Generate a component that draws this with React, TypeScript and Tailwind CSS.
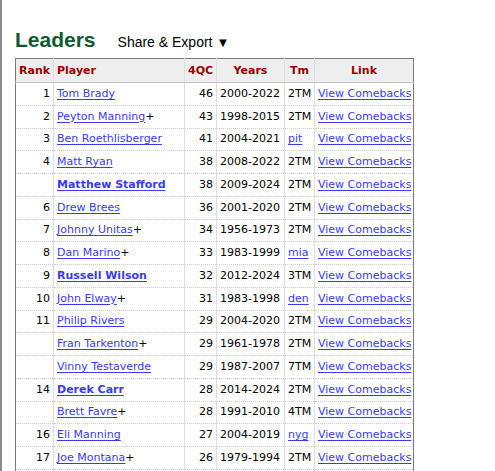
import React from "react";

type Row = { rank: string; name: string; plus?: boolean; bold?: boolean; qc: string; years: string; tm: string; tmLink?: boolean };

const rows: Row[] = [
  { rank: "1", name: "Tom Brady", qc: "46", years: "2000-2022", tm: "2TM" },
  { rank: "2", name: "Peyton Manning", plus: true, qc: "43", years: "1998-2015", tm: "2TM" },
  { rank: "3", name: "Ben Roethlisberger", qc: "41", years: "2004-2021", tm: "pit", tmLink: true },
  { rank: "4", name: "Matt Ryan", qc: "38", years: "2008-2022", tm: "2TM" },
  { rank: "", name: "Matthew Stafford", bold: true, qc: "38", years: "2009-2024", tm: "2TM" },
  { rank: "6", name: "Drew Brees", qc: "36", years: "2001-2020", tm: "2TM" },
  { rank: "7", name: "Johnny Unitas", plus: true, qc: "34", years: "1956-1973", tm: "2TM" },
  { rank: "8", name: "Dan Marino", plus: true, qc: "33", years: "1983-1999", tm: "mia", tmLink: true },
  { rank: "9", name: "Russell Wilson", bold: true, qc: "32", years: "2012-2024", tm: "3TM" },
  { rank: "10", name: "John Elway", plus: true, qc: "31", years: "1983-1998", tm: "den", tmLink: true },
  { rank: "11", name: "Philip Rivers", qc: "29", years: "2004-2020", tm: "2TM" },
  { rank: "", name: "Fran Tarkenton", plus: true, qc: "29", years: "1961-1978", tm: "2TM" },
  { rank: "", name: "Vinny Testaverde", qc: "29", years: "1987-2007", tm: "7TM" },
  { rank: "14", name: "Derek Carr", bold: true, qc: "28", years: "2014-2024", tm: "2TM" },
  { rank: "", name: "Brett Favre", plus: true, qc: "28", years: "1991-2010", tm: "4TM" },
  { rank: "16", name: "Eli Manning", qc: "27", years: "2004-2019", tm: "nyg", tmLink: true },
  { rank: "17", name: "Joe Montana", plus: true, qc: "26", years: "1979-1994", tm: "2TM" },
];

const link = "text-[#3a3af5] underline underline-offset-[2px]";
const th = "h-[24px] px-[3px] font-bold text-[#990000] bg-[#eeeeee] border-b border-[#c4c4c4]";
const td = "px-[3px] border-l border-solid border-l-[#dddddd]";

export default function App() {
  return (
    <div className="min-h-[471px] border-l-2 border-[#8a8a8a] bg-white pl-[13px]">
      <div className="flex items-baseline pt-[28px]">
        <h2
          className="text-[21px] leading-[24px] font-bold text-[#0f5a32]"
          style={{ fontFamily: '"Liberation Sans", Arial, sans-serif' }}
        >
          Leaders
        </h2>
        <span
          className="ml-[22px] text-[14px] leading-[24px] text-black"
          style={{ fontFamily: '"Liberation Sans", Arial, sans-serif' }}
        >
          Share &amp; Export <span className="text-[13px]">▼</span>
        </span>
      </div>
      <table
        className="mt-[3px] table-fixed border-collapse border border-[#7a7a7a] text-[11px] leading-[14px] text-black"
        style={{ fontFamily: '"DejaVu Sans", Verdana, sans-serif', width: 398 }}
      >
        <colgroup>
          <col style={{ width: 38 }} />
          <col style={{ width: 131 }} />
          <col style={{ width: 32 }} />
          <col style={{ width: 68 }} />
          <col style={{ width: 30 }} />
          <col style={{ width: 99 }} />
        </colgroup>
        <thead>
          <tr>
            <th className={th + " text-center"}>Rank</th>
            <th className={th + " text-left border-l border-l-[#dddddd]"}>Player</th>
            <th className={th + " text-right border-l border-l-[#dddddd]"}>4QC</th>
            <th className={th + " text-center border-l border-l-[#dddddd]"}>Years</th>
            <th className={th + " text-center border-l border-l-[#dddddd]"}>Tm</th>
            <th className={th + " text-center border-l border-l-[#dddddd]"}>Link</th>
          </tr>
        </thead>
        <tbody>
          {rows.map((r, i) => (
            <tr key={i} className="border-b border-dotted border-[#cccccc]">
              <td className="h-[22.75px] px-[3px] text-right whitespace-nowrap">{r.rank}</td>
              <td className={td + " text-left whitespace-nowrap"}>
                <a href="#" className={link + (r.bold ? " font-bold" : "")}>{r.name}</a>
                {r.plus ? "+" : ""}
              </td>
              <td className={td + " text-right"}>{r.qc}</td>
              <td className={td + " text-left whitespace-nowrap"}>{r.years}</td>
              <td className={td + " text-left"}>
                {r.tmLink ? <a href="#" className={link}>{r.tm}</a> : r.tm}
              </td>
              <td className={td + " text-left whitespace-nowrap"}>
                <a href="#" className={link}>View Comebacks</a>
              </td>
            </tr>
          ))}
          <tr>
            <td className="h-[22.75px] px-[3px]"></td>
            <td className={td}></td>
            <td className={td}></td>
            <td className={td}></td>
            <td className={td}></td>
            <td className={td}></td>
          </tr>
        </tbody>
      </table>
    </div>
  );
}
